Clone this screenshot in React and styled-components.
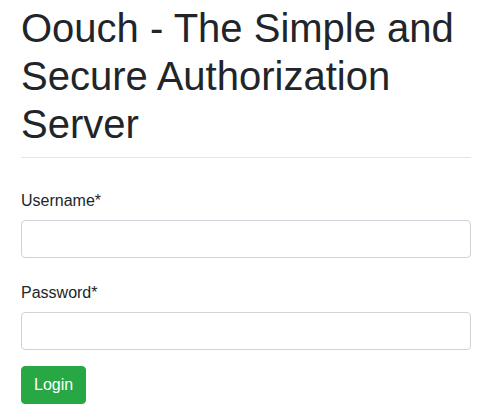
import React from "react";
import { createGlobalStyle, styled } from "styled-components";

const GlobalStyle = createGlobalStyle`
  *, *::before, *::after {
    box-sizing: border-box;
  }
  body {
    margin: 0;
    background: #fff;
    color: #212529;
    font-family: "Liberation Sans", Arial, sans-serif;
    font-size: 16px;
    line-height: 1.5;
  }
`;

const App = () => {
  return (
    <>
      <GlobalStyle />
      <Page>
        <Title>Oouch - The Simple and Secure Authorization Server</Title>
        <Divider />
        <LoginForm onSubmit={(e) => e.preventDefault()}>
          <FormGroup>
            <Label htmlFor="username">Username*</Label>
            <Input id="username" name="username" type="text" />
          </FormGroup>
          <FormGroup>
            <Label htmlFor="password">Password*</Label>
            <Input id="password" name="password" type="password" />
          </FormGroup>
          <SubmitButton type="submit">Login</SubmitButton>
        </LoginForm>
      </Page>
    </>
  );
};

export default App;

const Page = styled.div`
  padding: 4px 14px 0 21px;
`;

const Title = styled.h1`
  margin: 0 0 9px;
  font-size: 40px;
  font-weight: 500;
  line-height: 1.2;
`;

const Divider = styled.hr`
  margin: 0 0 31px;
  border: 0;
  border-top: 1px solid rgba(0, 0, 0, 0.1);
`;

const LoginForm = styled.form`
  display: flex;
  flex-direction: column;
  align-items: flex-start;
`;

const FormGroup = styled.div`
  display: flex;
  flex-direction: column;
  width: 100%;
  margin-bottom: 23px;

  &:last-of-type {
    margin-bottom: 16px;
  }
`;

const Label = styled.label`
  display: block;
  margin-bottom: 7px;
`;

const Input = styled.input`
  display: block;
  width: 100%;
  height: 38px;
  padding: 6px 12px;
  font: inherit;
  color: #495057;
  background: #fff;
  border: 1px solid #ced4da;
  border-radius: 4px;
  outline: none;
`;

const SubmitButton = styled.button`
  display: inline-block;
  padding: 6px 12px;
  font: inherit;
  line-height: 1.5;
  color: #fff;
  background: #28a745;
  border: 1px solid #28a745;
  border-radius: 4px;
  cursor: pointer;
`;
